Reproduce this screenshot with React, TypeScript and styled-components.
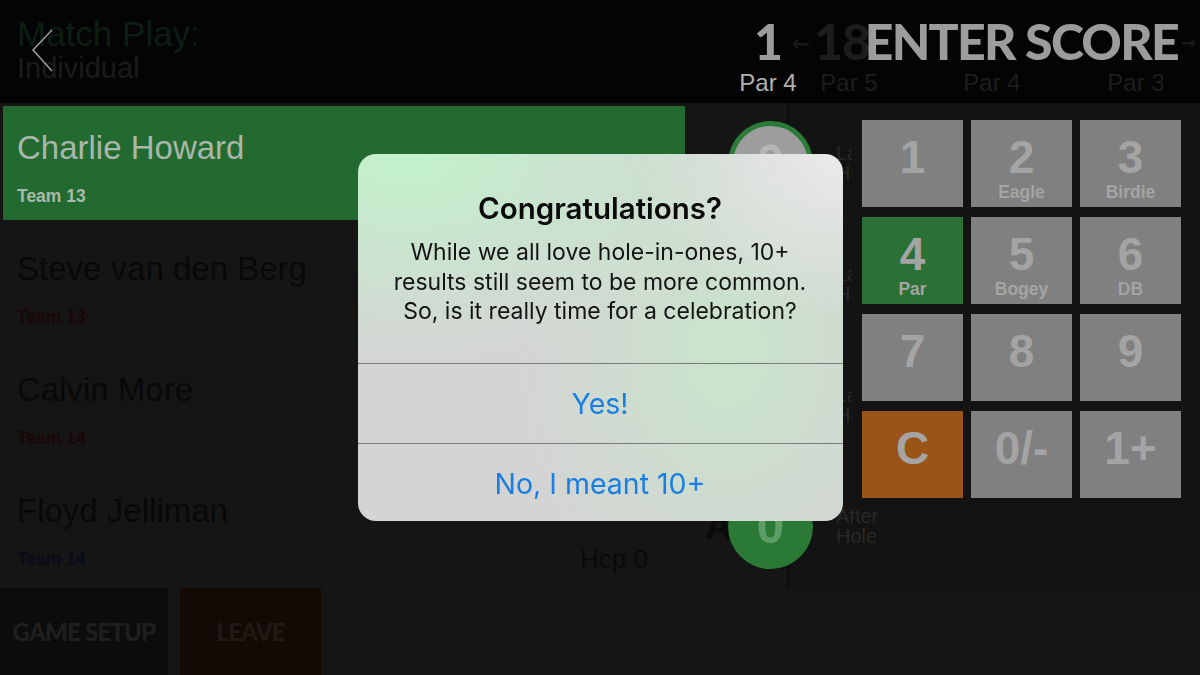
import React from 'react';
import styled, { createGlobalStyle } from 'styled-components';

const Global = createGlobalStyle`
  html, body { margin: 0; padding: 0; background: #040404; }
  body {
    width: 1200px;
    height: 675px;
    overflow: hidden;
    font-family: "Liberation Sans", Arial, sans-serif;
  }
  * { box-sizing: border-box; }
`;

const Screen = styled.div`
  position: relative;
  width: 1200px;
  height: 675px;
  display: flex;
  flex-direction: column;
  background: #151515;
  overflow: hidden;
`;

/* ---------- header ---------- */
const Header = styled.header`
  position: relative;
  flex: none;
  height: 103px;
  display: flex;
  background: #040404;
`;

const TitleBlock = styled.div`
  position: relative;
  width: 739px;
  padding: 16px 0 0 17px;
`;

const BackButton = styled.svg`
  position: absolute;
  left: 30px;
  top: 28px;
`;

const GameTitle = styled.div`
  font-size: 35px;
  line-height: 36px;
  color: #0c1e13;
`;

const GameSub = styled.div`
  margin-top: 1px;
  font-size: 29px;
  line-height: 30px;
  color: #1b1b1b;
`;

const HoleStrip = styled.div`
  position: relative;
  flex: 1;
  display: flex;
  padding-top: 16px;
`;

const Hole = styled.div<{ $lead: number }>`
  position: relative;
  width: 58px;
  margin-left: ${(p) => p.$lead}px;
  display: flex;
  flex-direction: column;
  align-items: center;
`;

const HoleNumber = styled.div<{ $current?: boolean; $shift?: number }>`
  position: relative;
  height: 50px;
  margin-right: ${(p) => (p.$shift ?? 0) * 2}px;
  font-family: Lato, "Liberation Sans", sans-serif;
  font-weight: 900;
  font-size: 50px;
  line-height: 50px;
  letter-spacing: -1px;
  color: ${(p) => (p.$current ? '#9c9c9c' : '#1c1c1c')};
  white-space: nowrap;
`;

const PrevArrow = styled.span`
  position: absolute;
  right: 100%;
  top: 0;
  margin-right: 4px;
  font-family: "DejaVu Sans", sans-serif;
  font-weight: 700;
  font-size: 22px;
  line-height: 56px;
  letter-spacing: 0;
  color: #181818;
`;

const HolePar = styled.div<{ $current?: boolean }>`
  margin-top: 4px;
  font-size: 24px;
  line-height: 26px;
  white-space: nowrap;
  color: ${(p) => (p.$current ? '#b0b0b0' : '#1d1d1d')};
`;

const ScreenTitle = styled.h1`
  position: absolute;
  right: 22px;
  top: 16px;
  margin: 0;
  font-family: Lato, "Liberation Sans", sans-serif;
  font-weight: 900;
  font-size: 50px;
  line-height: 50px;
  letter-spacing: -1.7px;
  color: #9c9c9c;
  white-space: nowrap;
`;

const NextArrow = styled.span`
  position: absolute;
  right: 4px;
  top: 32px;
  font-family: "DejaVu Sans", sans-serif;
  font-weight: 700;
  font-size: 18px;
  color: #181818;
`;

/* ---------- body ---------- */
const Body = styled.main`
  flex: 1;
  min-height: 0;
  display: flex;
  background: #151515;
`;

const Board = styled.section`
  position: relative;
  z-index: 2;
  width: 787px;
  flex: none;
  padding: 3px 0 0 3px;
  display: flex;
  flex-direction: column;
  gap: 7px;
`;

const PlayerRow = styled.div`
  height: 114px;
  display: flex;
`;

const PlayerCard = styled.div<{ $active?: boolean }>`
  width: 682px;
  flex: none;
  padding: 24px 37px 0 14px;
  background: ${(p) => (p.$active ? '#236a30' : 'transparent')};
`;

const PlayerName = styled.div<{ $active?: boolean }>`
  font-size: 33px;
  line-height: 36px;
  color: ${(p) => (p.$active ? '#a9b6aa' : '#080808')};
  white-space: nowrap;
`;

const PlayerMeta = styled.div`
  margin-top: 20px;
  display: flex;
  align-items: center;
  justify-content: space-between;
`;

const TeamLabel = styled.span<{ $color: string }>`
  font-weight: 700;
  font-size: 17.5px;
  line-height: 20px;
  color: ${(p) => p.$color};
`;

const Handicap = styled.span`
  font-size: 26px;
  line-height: 20px;
  color: #0a0a0a;
`;

const ScoreCell = styled.div`
  width: 102px;
  flex: none;
  display: flex;
  align-items: center;
  padding-left: 20px;
`;

const Mark = styled.span`
  width: 23px;
  flex: none;
  font-weight: 700;
  font-size: 38px;
  color: #0a0a0a;
`;

const ScoreBall = styled.div<{ $filled?: boolean }>`
  width: 85px;
  height: 85px;
  flex: none;
  border-radius: 50%;
  display: flex;
  align-items: center;
  justify-content: center;
  background: ${(p) => (p.$filled ? '#2a7935' : '#9d9d9d')};
  border: ${(p) => (p.$filled ? 'none' : '5px solid #2c7a38')};
  font-weight: 700;
  font-size: 50px;
  color: ${(p) => (p.$filled ? '#5e9d66' : '#b6b6b6')};
`;

const SidePanel = styled.section`
  position: relative;
  flex: 1;
  background: #131313;
  border-left: 2px solid #0d0d0d;
`;

const HoleLabels = styled.div`
  padding: 3px 0 0 47px;
  display: flex;
  flex-direction: column;
  gap: 7px;
`;

const HoleLabel = styled.div`
  height: 114px;
  display: flex;
  flex-direction: column;
  justify-content: center;
  font-size: 20px;
  line-height: 20px;
  color: #282828;
`;

const KeypadPanel = styled.div`
  position: absolute;
  top: 0;
  left: 63px;
  right: 0;
  height: 407px;
  padding: 17px 0 0 10px;
  background: #131313;
`;

const Keypad = styled.div`
  display: grid;
  grid-template-columns: repeat(3, 101px);
  grid-auto-rows: 87px;
  column-gap: 8px;
  row-gap: 10px;
`;

const Key = styled.div<{ $tone: 'gray' | 'green' | 'orange' }>`
  display: flex;
  flex-direction: column;
  align-items: center;
  padding-top: 14px;
  background: ${(p) =>
    p.$tone === 'green' ? '#2b7034' : p.$tone === 'orange' ? '#9a5417' : '#808080'};
  color: #a4a4a4;
`;

const KeyDigit = styled.div`
  font-weight: 700;
  font-size: 46px;
  line-height: 46px;
`;

const KeyHint = styled.div`
  margin-top: 3px;
  font-weight: 700;
  font-size: 17.5px;
  line-height: 18px;
`;

/* ---------- footer ---------- */
const Footer = styled.footer`
  flex: none;
  height: 87px;
  display: flex;
  gap: 12px;
  background: #151515;
`;

const FooterButton = styled.div<{ $width: number; $bg: string; $fg: string }>`
  width: ${(p) => p.$width}px;
  display: flex;
  align-items: center;
  justify-content: center;
  background: ${(p) => p.$bg};
  color: ${(p) => p.$fg};
  font-family: Lato, "Liberation Sans", sans-serif;
  font-weight: 900;
  font-size: 24px;
  letter-spacing: -0.8px;
`;

/* ---------- alert ---------- */
const Overlay = styled.div`
  position: fixed;
  inset: 0;
  z-index: 10;
  display: flex;
  align-items: center;
  justify-content: center;
`;

const Alert = styled.div`
  width: 485px;
  height: 367px;
  border-radius: 18px;
  overflow: hidden;
  display: flex;
  flex-direction: column;
  font-family: Inter, "Liberation Sans", sans-serif;
  background:
    radial-gradient(ellipse 340px 210px at 10% 0%, rgba(194, 242, 203, 1), rgba(194, 242, 203, 0) 100%),
    radial-gradient(ellipse 200px 160px at 100% 0%, rgba(234, 234, 234, 1), rgba(234, 234, 234, 0) 100%),
    radial-gradient(ellipse 210px 270px at 76% 55%, rgba(200, 229, 202, 0.95), rgba(200, 229, 202, 0) 100%),
    #d4d4d4;
`;

const AlertBody = styled.div`
  height: 209px;
  flex: none;
  padding-top: 37px;
  text-align: center;
`;

const AlertTitle = styled.div`
  font-weight: 600;
  font-size: 29.5px;
  line-height: 35px;
  color: #0a0a0a;
`;

const AlertMessage = styled.div`
  margin-top: 12px;
  font-size: 23px;
  line-height: 29.5px;
  color: #141414;
`;

const AlertAction = styled.div`
  height: 80px;
  flex: none;
  display: flex;
  align-items: center;
  justify-content: center;
  border-top: 1px solid #7a7a7a;
  font-size: 28.5px;
  color: #1a7fe2;
`;

type Player = {
  name: string;
  team: string;
  teamColor: string;
  active?: boolean;
  hcp?: string;
  mark?: string;
  filled?: boolean;
};

const players: Player[] = [
  { name: 'Charlie Howard', team: 'Team 13', teamColor: '#a9b9aa', active: true },
  { name: 'Steve van den Berg', team: 'Team 13', teamColor: '#1c0707', filled: true },
  { name: 'Calvin More', team: 'Team 14', teamColor: '#1c0707', filled: true },
  { name: 'Floyd Jelliman', team: 'Team 14', teamColor: '#080b1a', hcp: 'Hcp 0', mark: 'A', filled: true },
];

const labels = [
  ['Last', 'Hole'],
  ['Last', 'Hole'],
  ['Last', 'Hole'],
  ['After', 'Hole'],
];

const keys: { digit: string; hint?: string; tone: 'gray' | 'green' | 'orange' }[] = [
  { digit: '1', tone: 'gray' },
  { digit: '2', hint: 'Eagle', tone: 'gray' },
  { digit: '3', hint: 'Birdie', tone: 'gray' },
  { digit: '4', hint: 'Par', tone: 'green' },
  { digit: '5', hint: 'Bogey', tone: 'gray' },
  { digit: '6', hint: 'DB', tone: 'gray' },
  { digit: '7', tone: 'gray' },
  { digit: '8', tone: 'gray' },
  { digit: '9', tone: 'gray' },
  { digit: 'C', tone: 'orange' },
  { digit: '0/-', tone: 'gray' },
  { digit: '1+', tone: 'gray' },
];

export default function App() {
  return (
    <Screen>
      <Global />
      <Header>
        <TitleBlock>
          <GameTitle>Match Play:</GameTitle>
          <GameSub>Individual</GameSub>
          <BackButton width="26" height="48" viewBox="0 0 26 48">
            <path d="M22 2 L3 22 L22 43" fill="none" stroke="#9a9a9a" strokeWidth="1.6" />
          </BackButton>
        </TitleBlock>
        <HoleStrip>
          <Hole $lead={0}>
            <HoleNumber $current>1</HoleNumber>
            <HolePar $current>Par 4</HolePar>
          </Hole>
          <Hole $lead={23}>
            <HoleNumber $shift={7}>
              <PrevArrow>←</PrevArrow>18
            </HoleNumber>
            <HolePar>Par 5</HolePar>
          </Hole>
          <Hole $lead={85}>
            <HoleNumber />
            <HolePar>Par 4</HolePar>
          </Hole>
          <Hole $lead={86}>
            <HoleNumber />
            <HolePar>Par 3</HolePar>
          </Hole>
          <NextArrow>→</NextArrow>
        </HoleStrip>
        <ScreenTitle>ENTER SCORE</ScreenTitle>
      </Header>

      <Body>
        <Board>
          {players.map((p) => (
            <PlayerRow key={p.name}>
              <PlayerCard $active={p.active}>
                <PlayerName $active={p.active}>{p.name}</PlayerName>
                <PlayerMeta>
                  <TeamLabel $color={p.teamColor}>{p.team}</TeamLabel>
                  {p.hcp && <Handicap>{p.hcp}</Handicap>}
                </PlayerMeta>
              </PlayerCard>
              <ScoreCell>
                <Mark>{p.mark ?? ''}</Mark>
                <ScoreBall $filled={p.filled}>0</ScoreBall>
              </ScoreCell>
            </PlayerRow>
          ))}
        </Board>
        <SidePanel>
          <HoleLabels>
            {labels.map((l, i) => (
              <HoleLabel key={i}>
                <span>{l[0]}</span>
                <span>{l[1]}</span>
              </HoleLabel>
            ))}
          </HoleLabels>
          <KeypadPanel>
            <Keypad>
              {keys.map((k) => (
                <Key key={k.digit} $tone={k.tone}>
                  <KeyDigit>{k.digit}</KeyDigit>
                  {k.hint && <KeyHint>{k.hint}</KeyHint>}
                </Key>
              ))}
            </Keypad>
          </KeypadPanel>
        </SidePanel>
      </Body>

      <Footer>
        <FooterButton $width={168} $bg="#0c0c0c" $fg="#1f1f1f">GAME SETUP</FooterButton>
        <FooterButton $width={141} $bg="#140904" $fg="#211914">LEAVE</FooterButton>
      </Footer>

      <Overlay>
        <Alert>
          <AlertBody>
            <AlertTitle>Congratulations?</AlertTitle>
            <AlertMessage>
              While we all love hole-in-ones, 10+
              <br />
              results still seem to be more common.
              <br />
              So, is it really time for a celebration?
            </AlertMessage>
          </AlertBody>
          <AlertAction>Yes!</AlertAction>
          <AlertAction>No, I meant 10+</AlertAction>
        </Alert>
      </Overlay>
    </Screen>
  );
}
